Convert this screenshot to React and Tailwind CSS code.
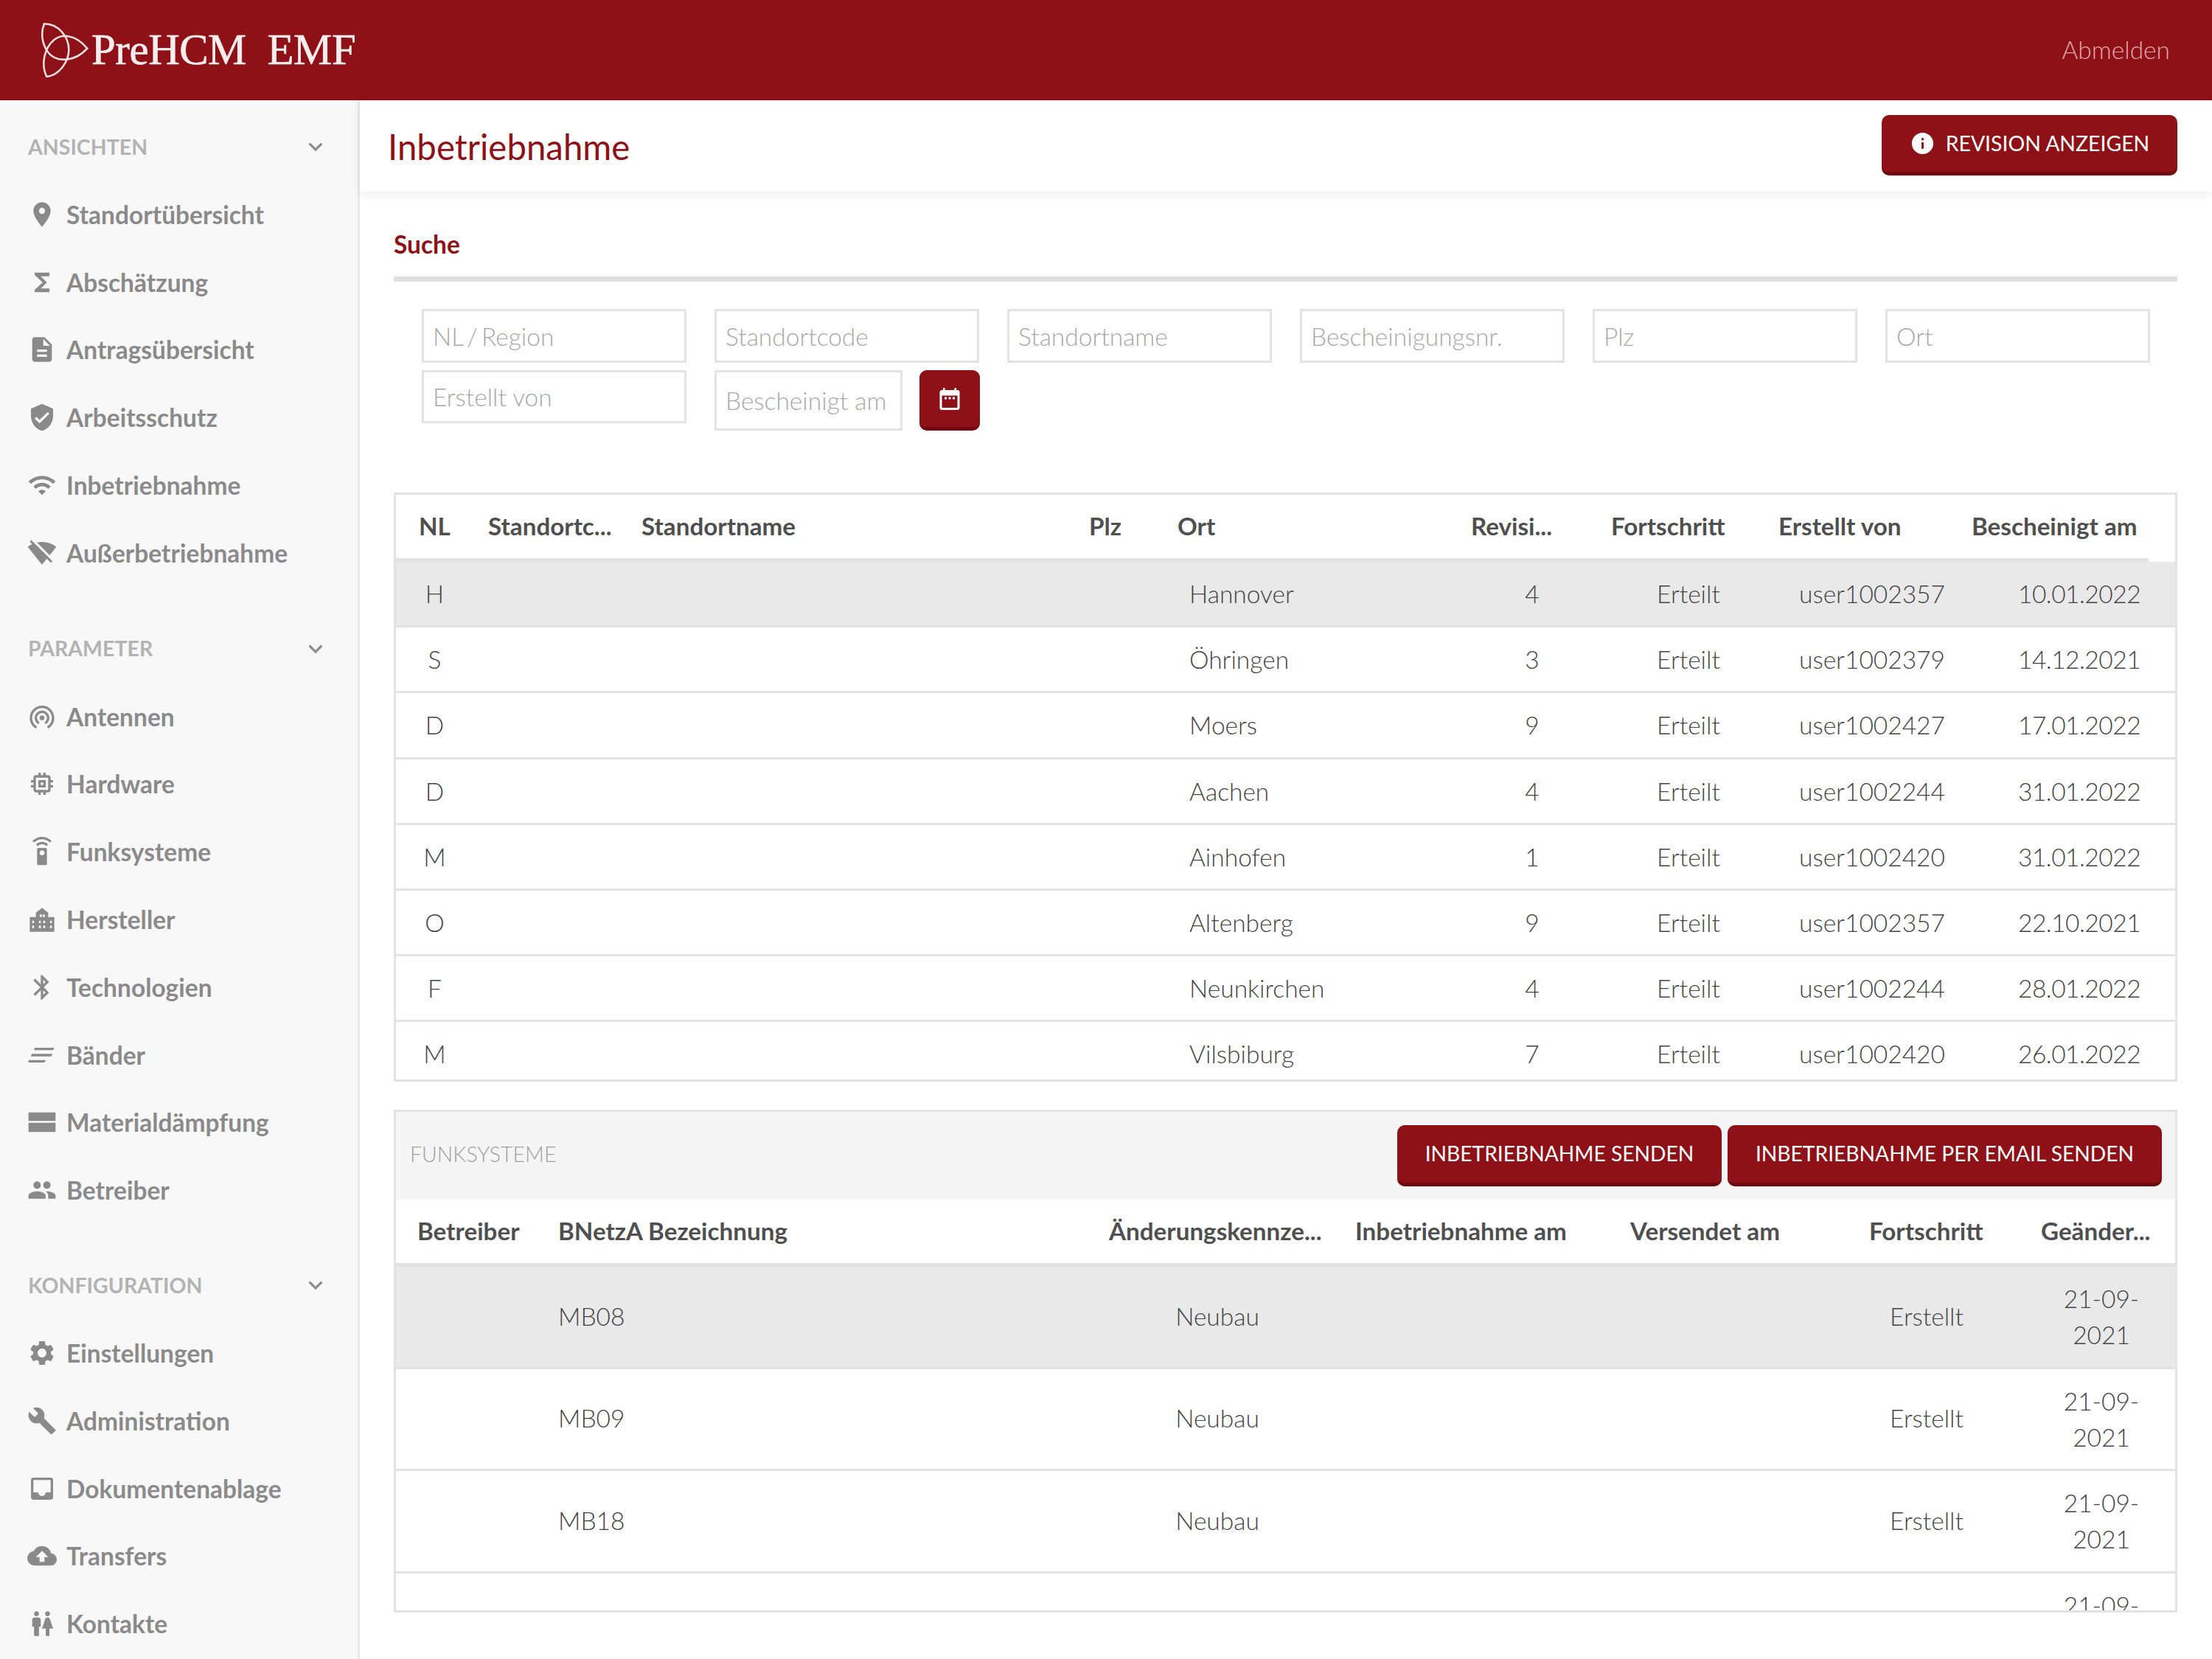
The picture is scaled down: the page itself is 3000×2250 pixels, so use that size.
import React from 'react';
import {
  MdPlace, MdFunctions, MdDescription, MdVerifiedUser, MdWifi, MdSignalWifiOff, MdWifiTethering, MdMemory,
  MdSettingsRemote, MdBluetooth, MdPeople, MdSettings, MdBuild, MdInbox, MdCloudUpload, MdWc, MdInfo, MdKeyboardArrowDown,
} from 'react-icons/md';

const City = (p) => (
  <svg viewBox="0 0 24 24" fill="currentColor" {...p}>
    <path fillRule="evenodd" d="M2 22v-12h5V6.500l5-4 5 4V10h5v12H2zM10.300 8v2h1.500V8h-1.500zm2.400 0v2h1.500V8h-1.500zM4 13v2h1.500v-2H4zm0 4v2h1.500v-2H4zm5.500-4v2H11v-2H9.500zm3.500 0v2h1.500v-2H13zm5.500 0v2H20v-2h-1.500zm0 4v2H20v-2h-1.500zm-9 0v2H11v-2H9.500zm3.500 0v2h1.500v-2H13z" />
  </svg>
);
const Bands = (p) => (
  <svg viewBox="0 0 24 24" fill="currentColor" {...p}>
    <path d="M6 6h16l-1 2H5.500zM3.500 11h17l-1 2H3zM1 16h14l-1 2H1z" />
  </svg>
);
const Stack = (p) => (
  <svg viewBox="0 0 24 24" fill="currentColor" {...p}>
    <path d="M1 4h22v7H1zM1 12.500h22V20H1z" />
  </svg>
);
const Calendar = (p) => (
  <svg viewBox="0 0 28 30" {...p}>
    <path fill="#fff" fillRule="evenodd" d="M5 0h2.500v3h13V0H23v3h1.500A3 3 0 0 1 27.500 6v21a3 3 0 0 1-3 3h-21a3 3 0 0 1-3-3V6a3 3 0 0 1 3-3H5zM3.500 10.500V26a1 1 0 0 0 1 1h19a1 1 0 0 0 1-1V10.500z" />
    <path fill="#fff" d="M7 12.500h3v3H7zM12.500 12.500h3v3h-3zM18 12.500h3v3h-3z" />
  </svg>
);
const Logo = () => (
  <svg viewBox="45 25 198 228" className="w-[66px] h-[76px] shrink-0" fill="none" stroke="#efe2e2" strokeWidth="7.500" strokeLinejoin="round" strokeLinecap="round">
    <path d="M60 35C120 35 160 90 160 140C160 190 120 245 70 250" />
    <path d="M60 35C45 70 50 115 75 150C105 190 180 195 235 135" />
    <path d="M70 250C50 210 55 155 85 115C125 65 190 80 235 135" />
  </svg>
);

const sections = [
  ['ANSICHTEN', 'mt-0', [
    [MdPlace, 'Standortübersicht'], [MdFunctions, 'Abschätzung'], [MdDescription, 'Antragsübersicht'],
    [MdVerifiedUser, 'Arbeitsschutz'], [MdWifi, 'Inbetriebnahme'], [MdSignalWifiOff, 'Außerbetriebnahme'],
  ]],
  ['PARAMETER', 'mt-[36px]', [
    [MdWifiTethering, 'Antennen'], [MdMemory, 'Hardware'], [MdSettingsRemote, 'Funksysteme'], [City, 'Hersteller'],
    [MdBluetooth, 'Technologien'], [Bands, 'Bänder'], [Stack, 'Materialdämpfung'], [MdPeople, 'Betreiber'],
  ]],
  ['KONFIGURATION', 'mt-[35px]', [
    [MdSettings, 'Einstellungen'], [MdBuild, 'Administration'], [MdInbox, 'Dokumentenablage'],
    [MdCloudUpload, 'Transfers'], [MdWc, 'Kontakte'],
  ]],
];

const siteRows = [
  ['H', 'Hannover', '4', 'user1002357', '10.01.2022'],
  ['S', 'Öhringen', '3', 'user1002379', '14.12.2021'],
  ['D', 'Moers', '9', 'user1002427', '17.01.2022'],
  ['D', 'Aachen', '4', 'user1002244', '31.01.2022'],
  ['M', 'Ainhofen', '1', 'user1002420', '31.01.2022'],
  ['O', 'Altenberg', '9', 'user1002357', '22.10.2021'],
  ['F', 'Neunkirchen', '4', 'user1002244', '28.01.2022'],
  ['M', 'Vilsbiburg', '7', 'user1002420', '26.01.2022'],
];

const redBtn = 'bg-[#8f1118] text-white rounded-[10px] border-b-[5px] border-[#6e0a10] flex items-center justify-center';
const inputCls = 'border-[3px] border-[#e3e3e3] bg-white px-[12px] text-[33.500px] font-light text-[#666] placeholder:text-[#a8a8a8] outline-none min-w-0';

function Field({ label, className = '' }) {
  return <input placeholder={label} className={`${inputCls} ${className}`} />;
}

export default function App() {
  return (
    <div className="w-[3000px] h-[2250px] overflow-hidden flex flex-col bg-white font-[family-name:Lato,sans-serif]">
      <header className="h-[136px] shrink-0 bg-[#8f1118] flex items-center justify-between pl-[55px] pr-[57px]">
        <div className="flex items-center -mt-[2px]">
          <Logo />
          <span className="ml-[3px] text-[59px] leading-none text-[#f6eeee] font-[family-name:'Liberation_Serif',serif] whitespace-pre tracking-[-0.5px] [-webkit-text-stroke:0.6px_#f6eeee]">PreHCM  EMF</span>
        </div>
        <span className="text-[33.500px] font-light text-[#e0a8ac] -mt-[2px]">Abmelden</span>
      </header>

      <div className="flex flex-1 min-h-0">
        <aside className="w-[488px] shrink-0 bg-[#f8f8f8] border-r-[3px] border-[#e8e8e8] pt-[15px] overflow-hidden">
          {sections.map(([title, mt, items]) => (
            <div key={title} className={mt}>
              <div className="h-[94px] flex items-center justify-between pl-[38px] pr-[38px] pt-[2px]">
                <span className="text-[28.500px] font-bold text-[#b3b3b3]">{title}</span>
                <MdKeyboardArrowDown className="w-[38px] h-[38px] text-[#8c8c8c]" />
              </div>
              {items.map(([Icon, label]) => (
                <div key={label} className="h-[91.800px] flex items-center text-[#8a8a8a]">
                  <div className="w-[90px] flex justify-center pl-[24px] shrink-0">
                    <Icon className="w-[40px] h-[40px]" />
                  </div>
                  <span className="text-[33.500px] font-bold">{label}</span>
                </div>
              ))}
            </div>
          ))}
        </aside>

        <main className="flex-1 min-w-0 flex flex-col">
          <div className="h-[124px] shrink-0 flex items-center justify-between pl-[38px] pr-[47px] shadow-[0_4px_14px_rgba(0,0,0,0.07)]">
            <h1 className="text-[47.400px] text-[#8f1118] mt-[2px]">Inbetriebnahme</h1>
            <button className={`${redBtn} w-[401px] h-[82px] -mt-[2px] gap-[14px]`}>
              <MdInfo className="w-[35px] h-[35px]" />
              <span className="text-[28.400px]">REVISION ANZEIGEN</span>
            </button>
          </div>

          <div className="pl-[46px] pr-[47px]">
            <div className="h-[122px] flex items-center border-b-[7px] border-[#e0e0e0] pt-[27px]">
              <h2 className="text-[33.500px] font-bold text-[#8f1118]">Suche</h2>
            </div>

            <div className="pl-[38px] pt-[37px]">
              <div className="grid grid-cols-[repeat(6,359px)] gap-x-[38px] gap-y-[10px]">
                <Field label="NL / Region" className="h-[73px] [word-spacing:-4px]" />
                <Field label="Standortcode" className="h-[73px]" />
                <Field label="Standortname" className="h-[73px]" />
                <Field label="Bescheinigungsnr." className="h-[73px]" />
                <Field label="Plz" className="h-[73px]" />
                <Field label="Ort" className="h-[73px]" />
                <Field label="Erstellt von" className="h-[72px]" />
                <div className="flex gap-[23px] h-[82px]">
                  <Field label="Bescheinigt am" className="w-[255px] shrink-0" />
                  <button className={`${redBtn} w-[82px] h-[82px] shrink-0`}>
                    <Calendar className="w-[28px] h-[30px]" />
                  </button>
                </div>
              </div>
            </div>

            <section className="mt-[84px] h-[799px] border-[3px] border-[#e3e3e3] overflow-hidden">
              <div className="h-[91px] mr-[36px] border-b-[5px] border-[#e3e3e3] grid grid-cols-[94px_208px_607px_120px_398px_190px_227px_262px_1fr] pl-[31px] items-center text-[33.200px] font-bold text-[#4f4f4f]">
                {['NL', 'Standortc...', 'Standortname', 'Plz', 'Ort', 'Revisi...', 'Fortschritt', 'Erstellt von', 'Bescheinigt am'].map((h) => (
                  <span key={h} className="whitespace-nowrap">{h}</span>
                ))}
              </div>
              {siteRows.map(([nl, ort, rev, user, date], i) => (
                <div key={i} className={`h-[89.200px] border-b-[3px] border-[#e3e3e3] grid grid-cols-[105px_208px_607px_156px_400px_130px_294px_300px_1fr] items-center text-[33.500px] font-light text-[#444] ${i === 0 ? 'bg-[#e9e9e9]' : ''}`}>
                  <span className="text-center">{nl}</span>
                  <span />
                  <span />
                  <span />
                  <span>{ort}</span>
                  <span className="text-center">{rev}</span>
                  <span className="text-center">Erteilt</span>
                  <span className="pl-[3px]">{user}</span>
                  <span className="tracking-[-0.5px]">{date}</span>
                </div>
              ))}
            </section>

            <section className="mt-[38px] h-[682px] border-[3px] border-[#e3e3e3] overflow-hidden">
              <div className="h-[119px] bg-[#f5f5f5] flex items-center justify-between pl-[19px] pr-[18px]">
                <span className="text-[28.500px] font-light text-[#a0a0a0] -mt-[4px]">FUNKSYSTEME</span>
                <div className="flex gap-[8px] -mt-[1px]">
                  <button className={`${redBtn} w-[440px] h-[83px] text-[28.200px]`}>INBETRIEBNAHME SENDEN</button>
                  <button className={`${redBtn} w-[589px] h-[83px] text-[28.200px]`}>INBETRIEBNAHME PER EMAIL SENDEN</button>
                </div>
              </div>
              <div className="h-[91px] border-b-[5px] border-[#e3e3e3] grid grid-cols-[191px_747px_334px_373px_324px_233px_1fr] pl-[29px] items-center text-[33.200px] font-bold text-[#4f4f4f]">
                {['Betreiber', 'BNetzA Bezeichnung', 'Änderungskennze...', 'Inbetriebnahme am', 'Versendet am', 'Fortschritt', 'Geänder...'].map((h) => (
                  <span key={h} className="whitespace-nowrap">{h}</span>
                ))}
              </div>
              {['MB08', 'MB09', 'MB18', ''].map((name, i) => (
                <div key={i} className={`h-[138.700px] border-b-[3px] border-[#e3e3e3] grid grid-cols-[220px_759px_270px_692px_270px_1fr] items-center text-[33.500px] font-light text-[#444] ${i === 0 ? 'bg-[#e9e9e9]' : ''}`}>
                  <span />
                  <span className="-mt-[2px]">{name}</span>
                  <span className="text-center -mt-[2px]">{name ? 'Neubau' : ''}</span>
                  <span />
                  <span className="text-center -mt-[2px]">{name ? 'Erstellt' : ''}</span>
                  <span className="text-center leading-[49px] pl-[2px]">21-09-<br />2021</span>
                </div>
              ))}
            </section>
          </div>
        </main>
      </div>
    </div>
  );
}
